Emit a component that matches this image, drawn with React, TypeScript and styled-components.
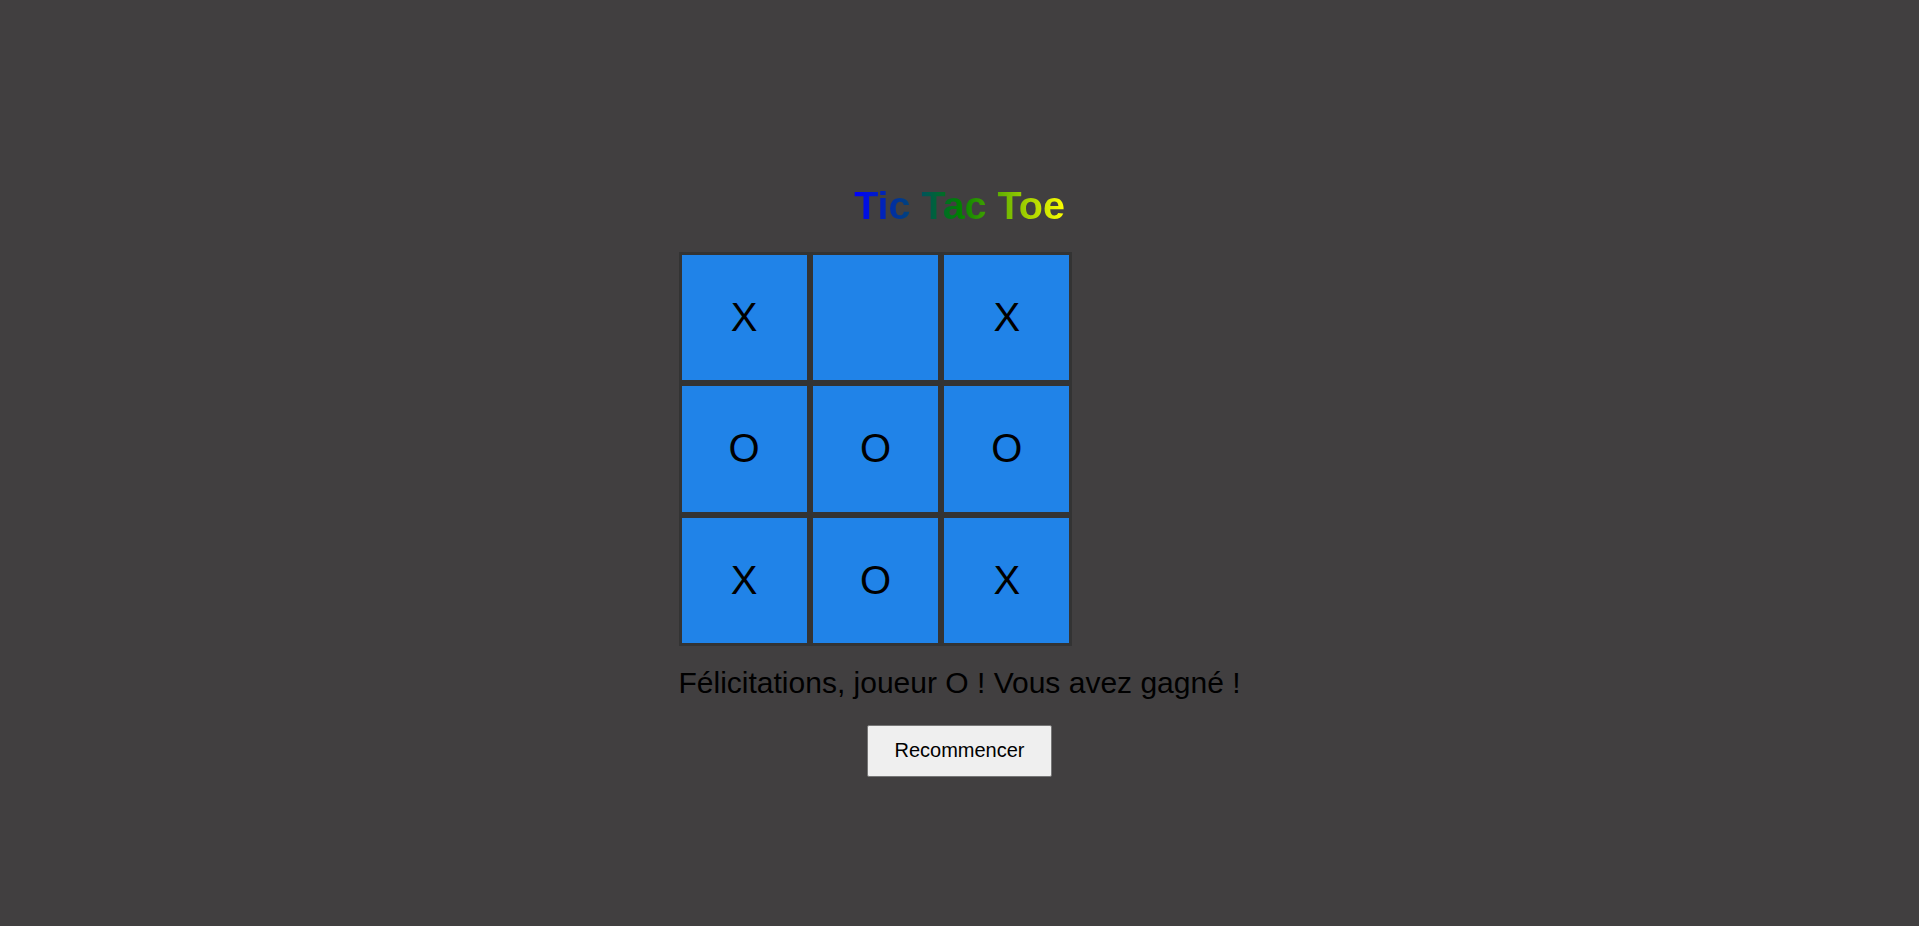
import React, { useState } from "react";
import styled, { createGlobalStyle } from "styled-components";

const GlobalStyle = createGlobalStyle`
  html, body {
    margin: 0;
    padding: 0;
    background: #413f40;
  }
  body {
    font-family: "Liberation Sans", Arial, sans-serif;
  }
`;

const Page = styled.main`
  min-height: 100vh;
  box-sizing: border-box;
  padding-top: 183px;
  display: flex;
  flex-direction: column;
  align-items: center;
  background: #413f40;
`;

const Title = styled.h1`
  margin: 0;
  font-family: "Liberation Sans", Arial, sans-serif;
  font-size: 39.5px;
  font-weight: 700;
  line-height: normal;
  text-align: center;
`;

const GradientText = styled.span`
  display: inline-block;
  background: linear-gradient(to right, #0000ff 0%, #008000 50%, #ffff00 100%);
  -webkit-background-clip: text;
  background-clip: text;
  color: transparent;
`;

const Game = styled.section`
  margin-top: 24px;
  width: fit-content;
  text-align: center;
`;

const Board = styled.div`
  width: 394px;
  display: grid;
  grid-template-columns: repeat(3, 1fr);
`;

const Cell = styled.button`
  box-sizing: border-box;
  height: 131.33px;
  margin: 0;
  padding: 0;
  border: 3px solid #333333;
  border-radius: 0;
  background: #2083e8;
  color: #000;
  font-family: "Liberation Sans", Arial, sans-serif;
  font-size: 40px;
  display: flex;
  align-items: center;
  justify-content: center;
  cursor: pointer;
`;

const Message = styled.p`
  margin: 20px 0 25px;
  font-family: "Liberation Sans", Arial, sans-serif;
  font-size: 30px;
  line-height: normal;
  color: #000;
  white-space: nowrap;
`;

const RestartButton = styled.button`
  box-sizing: border-box;
  height: 52px;
  padding: 0 26px;
  background: #efefef;
  border: 1px solid #767676;
  border-radius: 2px;
  color: #000;
  font-family: "Liberation Sans", Arial, sans-serif;
  font-size: 20px;
  cursor: pointer;
`;

const initial = ["X", "", "X", "O", "O", "O", "X", "O", "X"];

export default function App() {
  const [cells] = useState<string[]>(initial);
  return (
    <>
      <GlobalStyle />
      <Page>
        <Title>
          <GradientText>Tic Tac Toe</GradientText>
        </Title>
        <Game>
          <Board>
            {cells.map((c, i) => (
              <Cell key={i}>{c}</Cell>
            ))}
          </Board>
          <Message>Félicitations, joueur O ! Vous avez gagné !</Message>
          <RestartButton>Recommencer</RestartButton>
        </Game>
      </Page>
    </>
  );
}
